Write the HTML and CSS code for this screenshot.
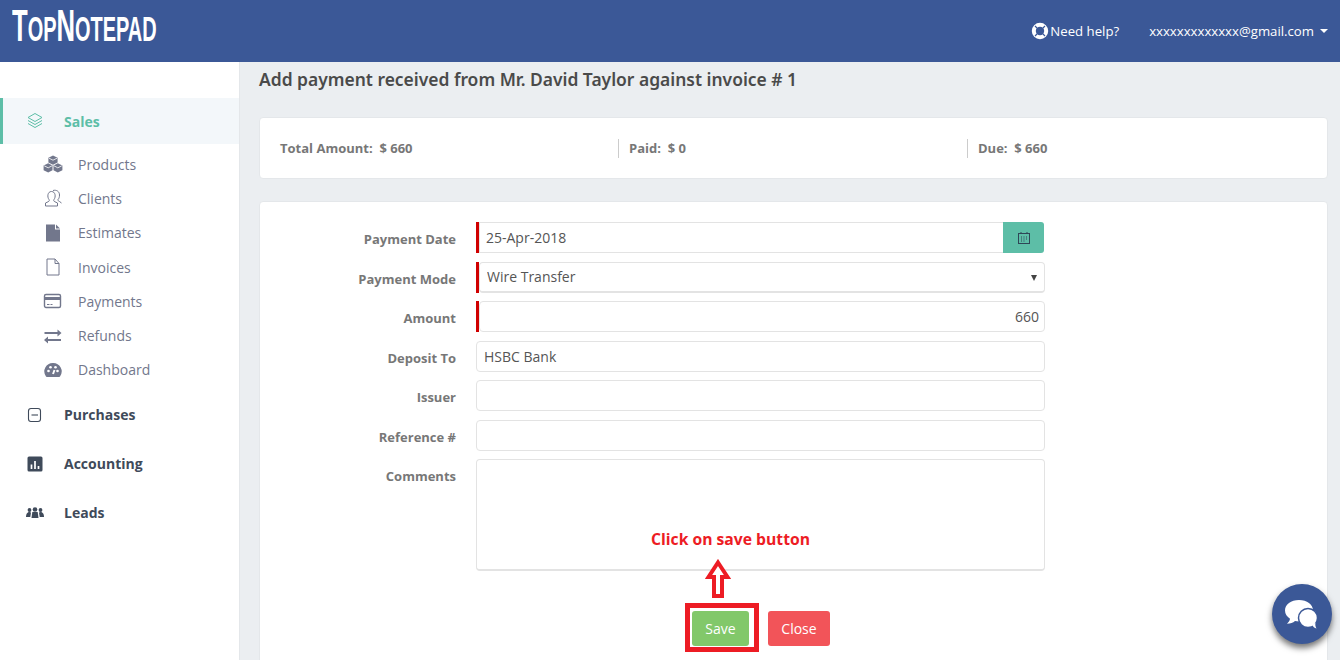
FILE: index.html
```html
<!DOCTYPE html>
<html lang="en">
<head>
    <meta charset="UTF-8">
    <meta name="viewport" content="width=device-width, initial-scale=1.0">
    <title>TopNotepad</title>
    <link rel="stylesheet" href="styles.css">
</head>
<body>
    <header class="topbar">
        <a class="logo"><span class="logo-text"><span class="cap">T</span>OP<span class="cap">N</span>OTEPAD</span></a>
        <div class="top-links">
            <span class="help">
                <svg width="18" height="18" viewBox="0 0 18 18"><circle cx="9" cy="9" r="6.2" fill="none" stroke="#fff" stroke-width="4"/><path d="M4 4l3 3M14 4l-3 3M4 14l3-3M14 14l-3-3" stroke="#3b5897" stroke-width="1.2"/></svg>
                Need help?
            </span>
            <span class="user">xxxxxxxxxxxxx@gmail.com<i class="caret"></i></span>
        </div>
    </header>

    <div class="layout">
        <nav class="sidebar">
            <div class="nav-main active">
                <svg class="nav-icon" width="18" height="18" viewBox="0 0 18 18" fill="none" stroke="#5dbea7" stroke-width="1"><path d="M9 1.500l7 4-7 4-7-4z"/><path d="M2 8.500l7 4 7-4"/><path d="M2 11.500l7 4 7-4"/></svg>
                Sales
            </div>
            <ul class="subnav">
                <li>
                    <svg width="20" height="18" viewBox="0 0 20 18" fill="#72778c"><path d="M10 .5l4.600 2.300v4.600L10 9.700 5.400 7.400V2.800z"/><path d="M5.200 8.200l4.300 2.200v4.800L5.200 17.400.6 15.200v-4.800z"/><path d="M14.800 8.200l4.600 2.200v4.800l-4.600 2.200-4.300-2.200v-4.800z"/><path d="M6 3.200l4 2 4-2M1.200 10.800l4 2 3.800-2M11 10.800l3.800 2 4-2" fill="none" stroke="#fff" stroke-width=".8"/></svg>
                    Products
                </li>
                <li>
                    <svg width="20" height="18" viewBox="0 0 20 18" fill="none" stroke="#72778c" stroke-width="1"><path d="M6 10.500C4 8 4.500 2.500 8.500 2.500s4.500 5.500 2.500 8c-.6 1-.3 1.800 1 2.300l2.500 1.200v3h-12v-3L5 12.800c1.300-.5 1.600-1.300 1-2.300z"/><path d="M10 1.500c3.500-1 6.500 1 6.500 4.500 0 2-.5 3.500-1.500 4.500-.3 1 .5 1.600 1.500 2l2 1.500"/></svg>
                    Clients
                </li>
                <li>
                    <svg width="20" height="18" viewBox="0 0 20 18" fill="#72778c"><path d="M3 .5h9v5h5v12H3z"/><path d="M13 .5l4 4h-4z"/></svg>
                    Estimates
                </li>
                <li>
                    <svg width="20" height="18" viewBox="0 0 20 18" fill="none" stroke="#72778c" stroke-width="1"><path d="M4 1h8l4 4.500V17H4z"/><path d="M12 1v4.500h4"/></svg>
                    Invoices
                </li>
                <li>
                    <svg width="20" height="18" viewBox="0 0 20 18"><rect x="1.500" y="2.500" width="16" height="13" rx="1.500" fill="none" stroke="#72778c" stroke-width="1.400"/><rect x="1.500" y="5" width="16" height="3" fill="#72778c"/><path d="M4 12.500h2.500M7.500 12.500h2" stroke="#72778c"/></svg>
                    Payments
                </li>
                <li>
                    <svg width="20" height="18" viewBox="0 0 20 18" fill="#72778c"><path d="M1.500 5h13V2.500l4 3.500-4 3.500V7h-13z"/><path d="M18 12H5V9.500L1 13l4 3.500V14h13z"/></svg>
                    Refunds
                </li>
                <li>
                    <svg width="20" height="18" viewBox="0 0 20 18"><path d="M10 2a8.500 8.500 0 0 0-7 13.500c.4.500 1 .5 1.400.5h11.200c.4 0 1 0 1.400-.5A8.500 8.500 0 0 0 10 2z" fill="#72778c"/><circle cx="5.500" cy="10" r="1.300" fill="#fff"/><circle cx="7.500" cy="6.300" r="1.300" fill="#fff"/><circle cx="12.500" cy="6.300" r="1.300" fill="#fff"/><circle cx="14.500" cy="10" r="1.300" fill="#fff"/><path d="M10 13l1.500-4" stroke="#fff" stroke-width="2"/></svg>
                    Dashboard
                </li>
            </ul>
            <div class="nav-main">
                <svg class="nav-icon" width="18" height="18" viewBox="0 0 18 18" fill="none" stroke="#3f4a5a" stroke-width="1.100"><rect x="2.500" y="2.500" width="12" height="13" rx="2.500"/><path d="M5.500 9h6.500"/></svg>
                Purchases
            </div>
            <div class="nav-main">
                <svg class="nav-icon" width="18" height="18" viewBox="0 0 18 18"><rect x="1.500" y="1.500" width="15" height="15" rx="1.500" fill="#3f4a5a"/><path d="M5.500 9.500v4.500M9 6v8M12.500 11v3" stroke="#fff" stroke-width="1.700"/></svg>
                Accounting
            </div>
            <div class="nav-main">
                <svg class="nav-icon" width="18" height="18" viewBox="0 0 18 18" fill="#3f4a5a"><circle cx="9" cy="5.500" r="2.300"/><path d="M5.500 14l.8-6h5.400l.8 6z"/><circle cx="3.500" cy="6" r="1.900"/><path d="M0 13c0-2.500 1-5 3.500-5l1.500.5-.7 4.500z"/><circle cx="14.500" cy="6" r="1.900"/><path d="M18 13c0-2.500-1-5-3.500-5l-1.500.5.700 4.500z"/></svg>
                Leads
            </div>
        </nav>

        <main class="content">
            <h1 class="page-title">Add payment received from Mr. David Taylor against invoice # 1</h1>

            <section class="card totals">
                <div class="total first">Total Amount:&nbsp; $ 660</div>
                <div class="total">Paid:&nbsp; $ 0</div>
                <div class="total">Due:&nbsp; $ 660</div>
            </section>

            <section class="card form-card">
                <div class="row">
                    <label>Payment Date</label>
                    <div class="field required date-group">
                        <input type="text" value="25-Apr-2018">
                        <button class="cal-btn" type="button">
                            <svg width="14" height="14" viewBox="0 0 14 14" fill="none" stroke="#2f4657"><rect x="1.500" y="2.500" width="11" height="10"/><path d="M4 1v2M10 1v2"/><path d="M4 6h1M6.500 6h1M9 6h1M4 8h1M6.500 8h1M9 8h1M4 10h1M6.500 10h1" stroke-width="1.200"/></svg>
                        </button>
                    </div>
                </div>
                <div class="row">
                    <label>Payment Mode</label>
                    <div class="field required select-wrap">
                        <select><option>Wire Transfer</option></select>
                    </div>
                </div>
                <div class="row">
                    <label>Amount</label>
                    <div class="field required">
                        <input class="num" type="text" value="660">
                    </div>
                </div>
                <div class="row">
                    <label>Deposit To</label>
                    <div class="field"><input class="plain" type="text" value="HSBC Bank"></div>
                </div>
                <div class="row">
                    <label>Issuer</label>
                    <div class="field"><input class="plain" type="text"></div>
                </div>
                <div class="row">
                    <label>Reference #</label>
                    <div class="field"><input class="plain" type="text"></div>
                </div>
                <div class="row row-comments">
                    <label>Comments</label>
                    <div class="field"><textarea></textarea></div>
                </div>
                <div class="actions">
                    <button class="btn btn-save" type="button">Save</button>
                    <button class="btn btn-close" type="button">Close</button>
                </div>
            </section>
        </main>
    </div>

    <!-- tutorial markup drawn over the form -->
    <div class="note-text">Click on save button</div>
    <svg class="note-arrow" width="26" height="40" viewBox="0 0 26 40"><path d="M13 3.500L22.500 18H17v19H9V18H3.500z" fill="#fff" stroke="#ed1c24" stroke-width="4"/></svg>
    <div class="note-box"></div>

    <div class="chat">
        <svg width="36" height="32" viewBox="0 0 36 32"><path d="M15 2C7 2 1 6.500 1 12.500c0 3.500 2 6.300 5 8.200-.3 2-1.500 3.500-3 5 3.500 0 6-1 8-2.700 1.300.3 2.600.5 4 .5 8 0 14-4.500 14-11C29 6.500 23 2 15 2z" fill="#fff"/><circle cx="24" cy="20" r="9.500" fill="#fff" stroke="#3b5897" stroke-width="1.500"/><path d="M28 27c1 1.500 2.500 3 4.500 3.500-1-1.500-1.500-4-1-6z" fill="#fff"/></svg>
    </div>
</body>
</html>
```

FILE: styles.css
```css
* {
    box-sizing: border-box;
}

html, body {
    height: 100%;
}

body {
    margin: 0;
    overflow: hidden;
    font-family: "Open Sans", sans-serif;
    background-color: #ebeef1;
    color: #555;
}

.topbar {
    height: 62px;
    background: #3b5897;
    display: flex;
    align-items: center;
    justify-content: space-between;
    padding: 0 12px;
    color: #fff;
}

.logo-text {
    display: block;
    font-family: "Liberation Sans", sans-serif;
    font-weight: 700;
    font-size: 35px;
    line-height: 46px;
    transform: scaleX(.57);
    transform-origin: left center;
    white-space: nowrap;
    margin-top: -8px;
}

.logo-text .cap {
    font-size: 45px;
}

.top-links {
    display: flex;
    align-items: center;
    font-size: 13.200px;
}

.help {
    display: flex;
    align-items: center;
    gap: 1px;
    margin-right: 30px;
}

.user {
    display: flex;
    align-items: center;
}

.caret {
    width: 0;
    height: 0;
    margin-left: 6px;
    border-left: 4px solid transparent;
    border-right: 4px solid transparent;
    border-top: 4px solid #fff;
}

.layout {
    display: flex;
    height: 598px;
}

.sidebar {
    width: 240px;
    flex-shrink: 0;
    background: #fff;
    border-right: 1px solid #e4e7ea;
    padding-top: 36px;
}

.nav-main {
    display: flex;
    align-items: center;
    height: 49px;
    padding-left: 26px;
    font-size: 14px;
    font-weight: 700;
    color: #3f4a5a;
}

.nav-main.active {
    height: 46px;
    background: #f3f7fa;
    border-left: 3px solid #5dbea7;
    padding-left: 23px;
    color: #5dbea7;
}

.nav-icon {
    margin-right: 20px;
}

.subnav {
    list-style: none;
    margin: 3px 0;
    padding: 0 0 0 43px;
}

.subnav li {
    display: flex;
    align-items: center;
    height: 34.300px;
    gap: 15px;
    font-size: 14px;
    color: #72778c;
}

.content {
    flex: 1;
    padding: 0 12px 0 19px;
    overflow: hidden;
}

.page-title {
    margin: 6px 0 26px;
    font-family: "Noto Sans", sans-serif;
    font-size: 17.450px;
    font-weight: 600;
    line-height: 23px;
    color: #4a4a4a;
}

.card {
    background: #fff;
    border: 1px solid #e4e7ea;
    border-radius: 4px;
}

.totals {
    display: flex;
    align-items: center;
    height: 62px;
    padding-left: 20px;
    margin-bottom: 22px;
}

.total {
    width: 349px;
    height: 19px;
    padding-left: 10px;
    border-left: 1px solid #ccc;
    font-size: 13px;
    font-weight: 700;
    line-height: 19px;
    color: #777;
}

.total.first {
    width: 338px;
    padding-left: 0;
    border-left: 0;
}

.form-card {
    height: 500px;
    padding-top: 20px;
}

.row {
    display: flex;
    height: 31px;
    margin-bottom: 8.500px;
}

.row label {
    width: 196px;
    margin-right: 20px;
    text-align: right;
    font-size: 13px;
    font-weight: 700;
    line-height: 34px;
    color: #777;
}

.row-comments {
    height: 112px;
}

.field {
    position: relative;
    display: flex;
    width: 569px;
}

.field input, .field select, .field textarea {
    flex: 1;
    min-width: 0;
    height: 100%;
    border: 1px solid #e3e3e3;
    border-radius: 4px;
    background: #fff;
    padding: 0 7px;
    font-family: "Open Sans", sans-serif;
    font-size: 14px;
    color: #555;
    outline: none;
    resize: none;
}

.field.required {
    border-left: 3px solid #d00000;
}

.field input.num {
    text-align: right;
    padding-right: 5px;
}

.field select, .field textarea {
    border-bottom-width: 2px;
}

.field select {
    appearance: none;
}

.select-wrap::after {
    content: "";
    position: absolute;
    right: 8px;
    top: 13px;
    border-left: 3px solid transparent;
    border-right: 3px solid transparent;
    border-top: 6px solid #444;
}

.date-group input {
    border-radius: 0;
    border-right: 0;
    padding-left: 6px;
}

.cal-btn {
    width: 41px;
    height: 100%;
    margin-right: 1px;
    border: 0;
    border-radius: 0 3px 3px 0;
    background: #5dbea7;
    padding: 0;
    display: flex;
    align-items: center;
    justify-content: center;
}

.actions {
    display: flex;
    gap: 19px;
    padding-left: 432px;
    margin-top: 39.500px;
}

.btn {
    height: 35px;
    border: 0;
    border-radius: 3px;
    font-family: "Open Sans", sans-serif;
    font-size: 14px;
    color: #fff;
    padding: 0;
}

.btn-save {
    width: 57px;
    background: #82c86a;
}

.btn-close {
    width: 62px;
    background: #f25459;
}

.note-text {
    position: absolute;
    left: 651px;
    top: 528px;
    font-size: 15.700px;
    font-weight: 700;
    line-height: 22px;
    color: #ed1c24;
}

.note-arrow {
    position: absolute;
    left: 705px;
    top: 559px;
}

.note-box {
    position: absolute;
    left: 685px;
    top: 603px;
    width: 74px;
    height: 49px;
    border: 5px solid #ed1c24;
}

.chat {
    position: fixed;
    left: 1272px;
    top: 584px;
    width: 60px;
    height: 60px;
    border-radius: 50%;
    background: #3b5897;
    box-shadow: 0 4px 6px rgba(0, 0, 0, .55);
    display: flex;
    align-items: center;
    justify-content: center;
}
```
